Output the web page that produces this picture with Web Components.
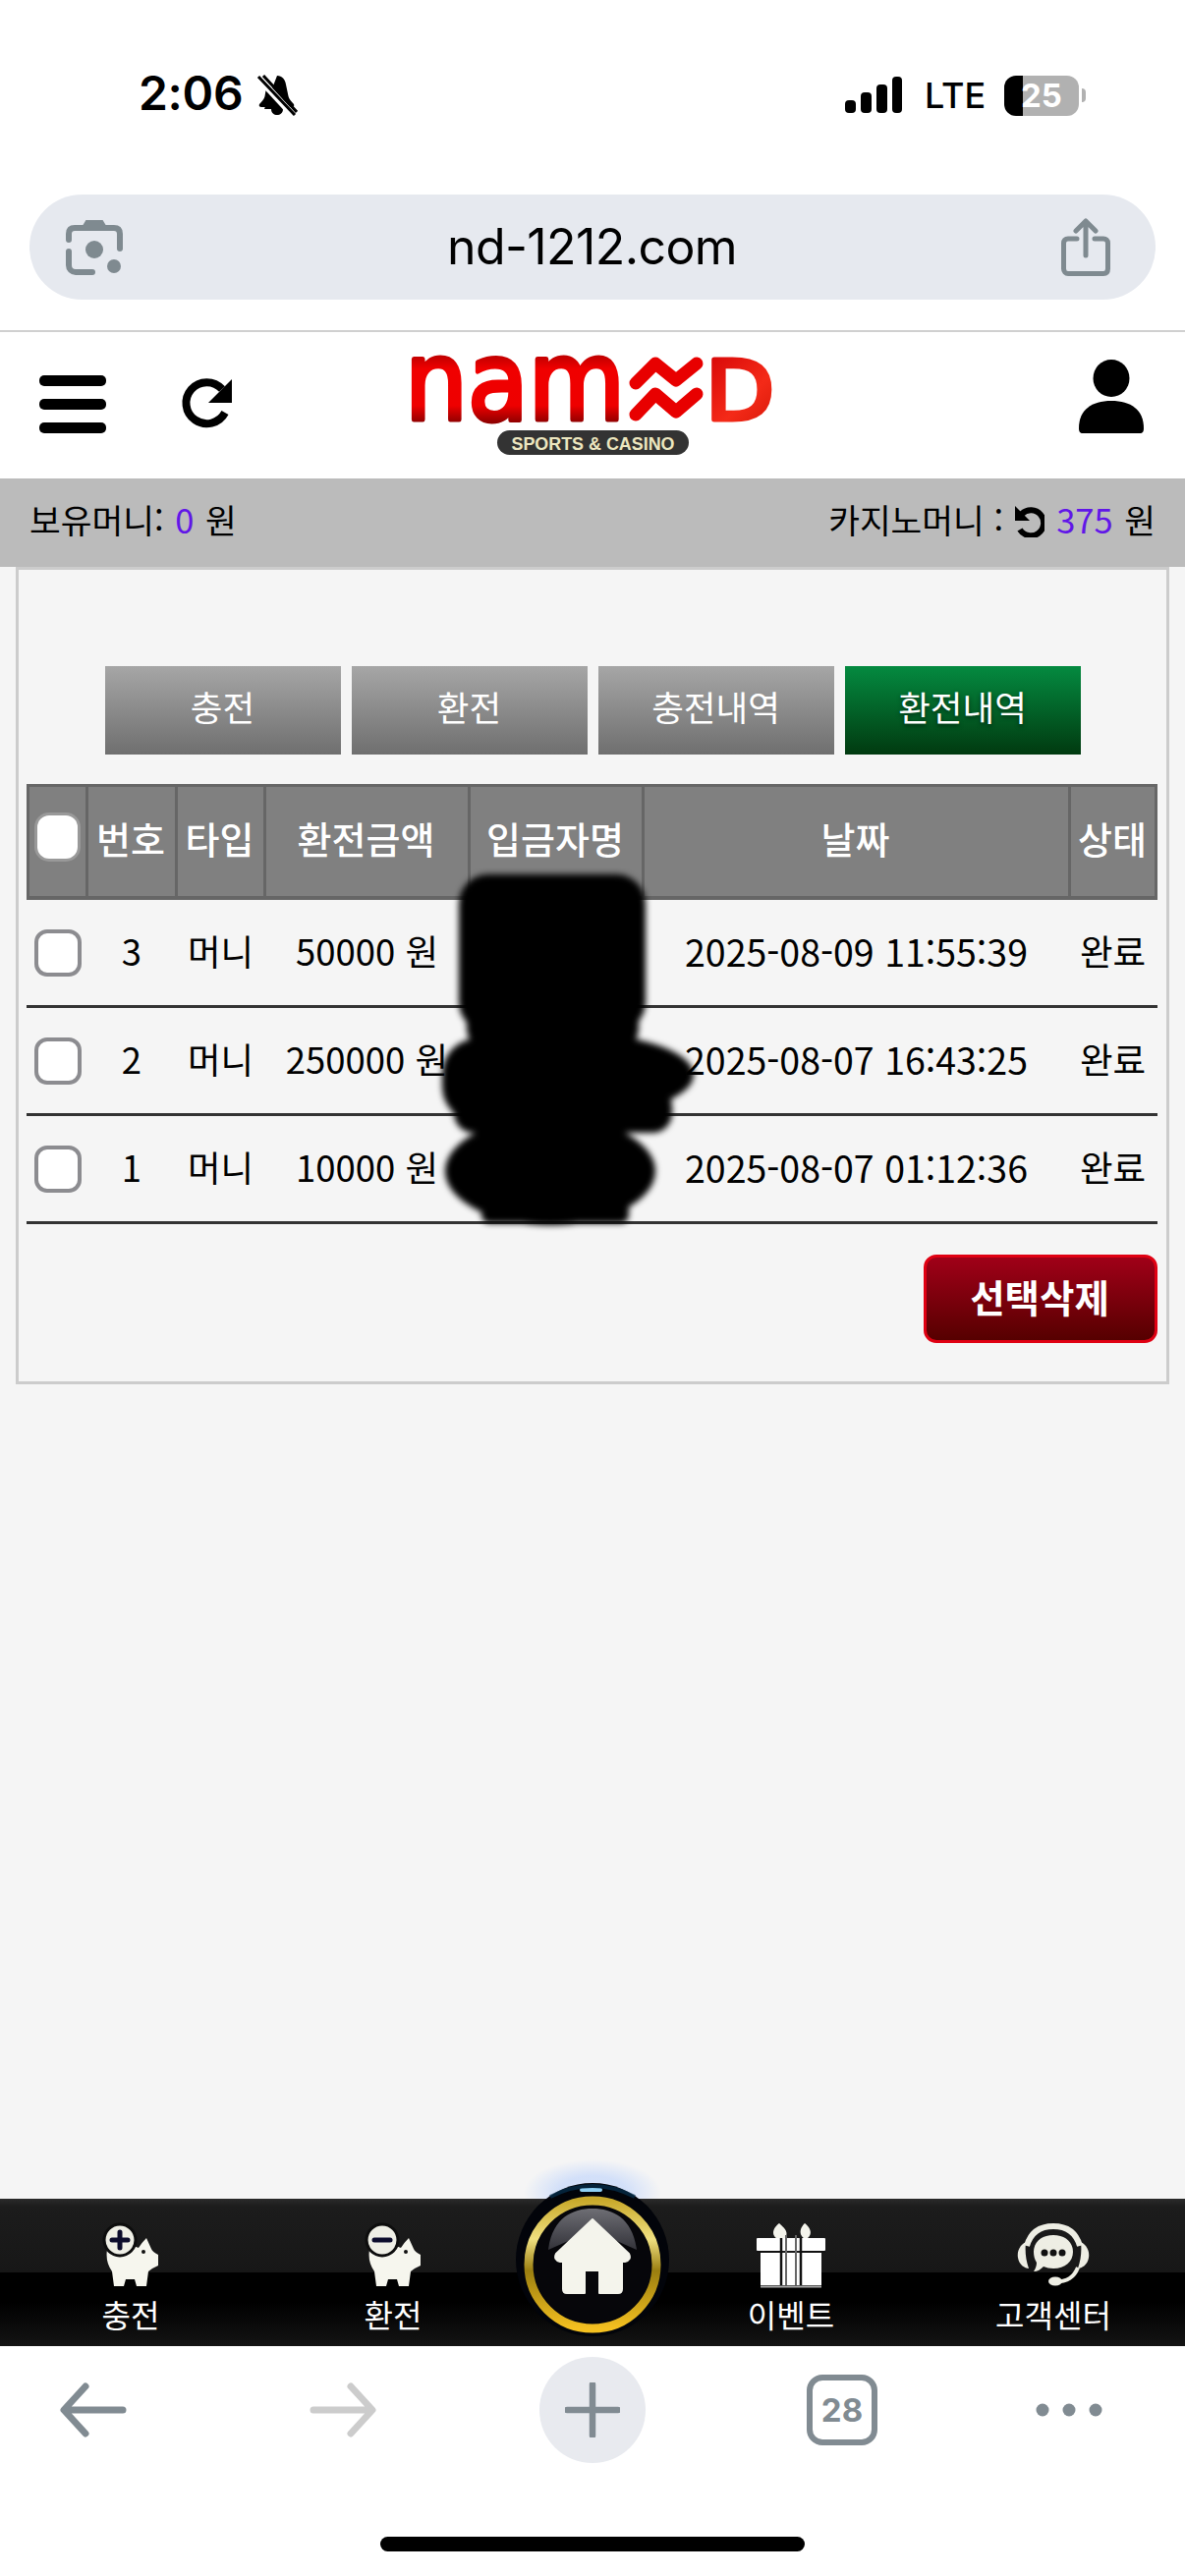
<!DOCTYPE html>
<html lang="ko">
<head>
<meta charset="utf-8">
<title>nd-1212.com</title>
<style>
  html, body { margin: 0; padding: 0; background: #f5f5f5; }
  body {
    width: 1206px;
    height: 2622px;
    display: flex;
    flex-direction: column;
    overflow: hidden;
    font-family: "Noto Sans CJK KR", "Noto Sans", sans-serif;
  }
  .grow { flex: 1; }
</style>
</head>
<body>
  <phone-top></phone-top>
  <site-header></site-header>
  <money-bar></money-bar>
  <history-panel></history-panel>
  <div class="grow"></div>
  <bottom-nav></bottom-nav>
  <browser-toolbar></browser-toolbar>

<script>
const KR = `"Noto Sans CJK KR", "Noto Sans", sans-serif`;
const COLS = '63px 91px 90px 208px 177px 434px 88px';

class PhoneTop extends HTMLElement {
  constructor() {
    super();
    this.attachShadow({ mode: 'open' });
  }
  connectedCallback() {
    this.shadowRoot.innerHTML = `
      <style>
        :host { display: block; background: #fff; height: 338px; box-sizing: border-box; border-bottom: 2px solid #d0d0d0; font-family: Inter, sans-serif; }
        #status { height: 198px; box-sizing: border-box; padding: 68px 101px 0 141px; display: flex; align-items: flex-start; }
        #time { font-size: 48px; line-height: 54px; font-weight: 600; letter-spacing: -0.3px; color: #000; }
        #bell { margin: 8px 0 0 14px; }
        #right { margin-left: auto; display: flex; align-items: flex-start; }
        #lte { font-size: 36px; line-height: 44px; font-weight: 500; margin: 7px 0 0 23px; width: 81px; color: #000; }
        #battery { position: relative; width: 76px; height: 41px; margin-top: 9px; border-radius: 12px; overflow: hidden; background: linear-gradient(90deg, #000 25%, #b1b1b1 25%); color: #fff; font-size: 33px; line-height: 41px; font-weight: 700; text-align: center; }
        #tip { width: 4px; height: 14px; margin: 22px 0 0 3px; background: #b1b1b1; border-radius: 0 8px 8px 0; }
        #bar { height: 107px; margin: 0 30px; border-radius: 54px; background: #e6e9ef; display: flex; align-items: center; justify-content: space-between; padding: 0 46px 0 37px; }
        #url { font-size: 50px; line-height: 107px; color: #000; letter-spacing: -0.6px; }
      </style>
      <div id="status">
        <span id="time">2:06</span>
        <svg id="bell" width="42" height="42" viewBox="0 0 42 42">
          <path d="M21 1c5 0 8 3.500 9 9l2.500 12c.5 3 3 5 5.500 8 1 2-.5 3-2 3H5c-1.500 0-3-1-2-3 2.500-3 5-5 5.500-8l1-6L30 35H8zM15 35h12c0 4-3 6-6 6s-6-2-6-6z" fill="#000"/>
          <path d="M2 3l35 38" stroke="#fff" stroke-width="7"/>
          <path d="M2 2l37 39M7 1l34 37" stroke="#000" stroke-width="3"/>
        </svg>
        <div id="right">
          <svg width="58" height="38" viewBox="0 0 58 38" style="margin-top:10px" fill="#000">
            <rect x="0" y="24" width="11" height="13" rx="4"/>
            <rect x="16" y="16" width="11" height="21" rx="4"/>
            <rect x="32" y="8" width="11" height="29" rx="4"/>
            <rect x="48" y="0" width="10" height="37" rx="4"/>
          </svg>
          <span id="lte">LTE</span>
          <div id="battery">25</div>
          <div id="tip"></div>
        </div>
      </div>
      <div id="bar">
        <svg width="58" height="58" viewBox="0 0 58 58" fill="none" stroke="#7f8a90" stroke-width="6" stroke-linecap="round">
          <path d="M3 21v-6c0-4 2-6 6-6h40c4 0 6 2 6 6v6" />
          <path d="M3 33v14c0 4 3 7 7 7h17" />
          <path d="M55 21v9"/>
          <path d="M18 7l3-5h16l3 5z" fill="#7f8a90" stroke-width="2"/>
          <circle cx="29" cy="31" r="9" fill="#7f8a90" stroke="none"/>
          <circle cx="49" cy="48" r="7" fill="#7f8a90" stroke="none"/>
        </svg>
        <span id="url">nd-1212.com</span>
        <svg width="50" height="60" viewBox="0 0 50 60" fill="none" stroke="#7f8a90" stroke-width="5" stroke-linecap="round" stroke-linejoin="round">
          <path d="M16 21H7c-3 0-4.500 2-4.500 4.500v26c0 3 2 5 4.500 5h36c3 0 4.500-2 4.500-5v-26c0-3-2-4.500-4.500-4.500h-9"/>
          <path d="M25 38V4M15 13l10-10 10 10"/>
        </svg>
      </div>`;
  }
}
customElements.define('phone-top', PhoneTop);

class SiteHeader extends HTMLElement {
  constructor() {
    super();
    this.attachShadow({ mode: 'open' });
  }
  connectedCallback() {
    this.shadowRoot.innerHTML = `
      <style>
        :host { display: block; background: #fff; height: 149px; position: relative; }
        #row { height: 100%; display: flex; align-items: flex-start; padding: 0 42px 0 40px; box-sizing: border-box; }
        #menu { margin-top: 44px; display: flex; flex-direction: column; gap: 12px; width: 68px; }
        #menu i { display: block; height: 11px; background: #000; border-radius: 5px; margin-bottom: 1px; }
        #refresh { margin: 46px 0 0 74px; }
        #logo { margin: 18px 0 0 168px; overflow: visible; }
        #user { margin: 28px 0 0 auto; }
        .brand { font-family: "DejaVu Sans", sans-serif; font-weight: 400; stroke-width: 5; stroke-linejoin: round; }
        .tag { font-family: "Liberation Sans", sans-serif; font-weight: 700; }
      </style>
      <div id="row">
        <div id="menu"><i></i><i></i><i></i></div>
        <svg id="refresh" width="56" height="54" viewBox="0 0 56 54" fill="none">
          <path d="M44 12A21 21 0 1 0 47 36" stroke="#000" stroke-width="8"/>
          <path d="M54 2v24H30z" fill="#000"/>
        </svg>
        <svg id="logo" width="394" height="112" viewBox="406 356 394 112">
          <defs>
            <linearGradient id="red" gradientUnits="userSpaceOnUse" x1="0" y1="362" x2="0" y2="430">
              <stop offset="0" stop-color="#c00000"/>
              <stop offset=".2" stop-color="#f00000"/>
              <stop offset=".75" stop-color="#ee0000"/>
              <stop offset="1" stop-color="#900000"/>
            </linearGradient>
            <linearGradient id="redD" gradientUnits="userSpaceOnUse" x1="722" y1="362" x2="790" y2="430">
              <stop offset="0" stop-color="#d80808"/>
              <stop offset=".6" stop-color="#f42a18"/>
              <stop offset="1" stop-color="#d81808"/>
            </linearGradient>
          </defs>
          <text class="brand" x="412" y="427" font-size="112" textLength="224" lengthAdjust="spacingAndGlyphs" fill="url(#red)" stroke="url(#red)">nam</text>
          <path d="M647 390l20-20 21 17 21-17M647 422l20-21 21 18 21-18" fill="none" stroke="#e80000" stroke-width="13" stroke-linecap="round" stroke-linejoin="round"/>
          <text class="brand" x="718" y="427" font-size="84" textLength="70" lengthAdjust="spacingAndGlyphs" fill="url(#redD)" stroke="url(#redD)">D</text>
          <rect x="506" y="438" width="195" height="25" rx="12.500" fill="#333"/>
          <text class="tag" x="603.500" y="457.500" font-size="19" text-anchor="middle" textLength="166" lengthAdjust="spacingAndGlyphs" fill="#ece6bf">SPORTS &amp; CASINO</text>
        </svg>
        <svg id="user" width="66" height="76" viewBox="0 0 66 76" fill="#000">
          <ellipse cx="33" cy="19" rx="18.500" ry="19"/>
          <path d="M0 70c0-19 13-28 33-28s33 9 33 28c0 3-1 5-4 5H4c-3 0-4-2-4-5z"/>
        </svg>
      </div>`;
  }
}
customElements.define('site-header', SiteHeader);

class MoneyBar extends HTMLElement {
  constructor() {
    super();
    this.attachShadow({ mode: 'open' });
  }
  connectedCallback() {
    this.shadowRoot.innerHTML = `
      <style>
        :host { display: flex; align-items: center; justify-content: space-between; height: 90px; box-sizing: border-box; background: #bbb; padding: 0 30px 8px; font-family: ${KR}; font-size: 34.500px; color: #000; white-space: nowrap; }
        b { font-weight: 400; color: #6116e8; margin: 0 2px 0 2px; }
        span { display: flex; align-items: center; }
        svg { margin: 4px 12px 0 10px; }
        .gap { white-space: pre; }
      </style>
      <span><span class="gap">보유머니: </span><b>0</b><span class="gap"> 원</span></span>
      <span><span class="gap">카지노머니 :</span><svg width="32" height="34" viewBox="0 0 32 34" fill="none"><path d="M9 10A13 13 0 1 1 7 26" stroke="#000" stroke-width="6"/><path d="M2 2v15h15z" fill="#000"/></svg><b style="margin-left:0">375</b><span class="gap"> 원</span></span>`;
  }
}
customElements.define('money-bar', MoneyBar);

const HistoryRowStyle = `
:host {
  display: grid;
  grid-template-columns: ${COLS};
  height: 110px;
  box-sizing: border-box;
  border-bottom: 3px solid #333;
  align-items: center;
  text-align: center;
  color: #000;
  font-size: 36.500px;
  white-space: nowrap;
}
span { padding: 0 3px 5px 0; }
.date { font-size: 37.500px; }
i {
  display: block;
  width: 48px;
  height: 48px;
  box-sizing: border-box;
  margin-left: 8px;
  background: #fff;
  border: 4px solid #8c8c90;
  border-radius: 13px;
}
`;

class HistoryRow extends HTMLElement {
  constructor() {
    super();
    this.attachShadow({ mode: 'open' });
  }
  connectedCallback() {
    const a = (n) => this.getAttribute(n);
    this.shadowRoot.innerHTML = `<style>${HistoryRowStyle}</style>
      <i></i><span>${a('no')}</span><span>머니</span><span>${a('amount')} 원</span><span></span><span class="date">${a('date')}</span><span>완료</span>`;
  }
}
customElements.define('history-row', HistoryRow);

class HistoryPanel extends HTMLElement {
  constructor() {
    super();
    this.attachShadow({ mode: 'open' });
  }
  connectedCallback() {
    this.shadowRoot.innerHTML = `
      <style>
        :host { display: block; position: relative; box-sizing: border-box; margin: 0 16px; height: 832px; padding: 98px 9px 0 8px; background: #f5f5f5; border: 3px solid #ccc; font-family: ${KR}; }
        #tabs { display: flex; gap: 11px; justify-content: center; margin-left: 1px; }
        #tabs a { width: 240px; height: 90px; line-height: 82px; text-align: center; color: #fff; font-size: 35.500px; background: linear-gradient(#a6a6a6, #6f6f6f); }
        #tabs a.on { background: linear-gradient(#048a40, #013a10); text-shadow: 0 2px 4px rgba(0,0,0,.5); }
        #head { margin-top: 30px; display: grid; grid-template-columns: ${COLS}; height: 118px; box-sizing: border-box; background: #808080; box-shadow: inset 0 0 0 3px #666, inset 0 -4px 0 #666; color: #fff; font-size: 38px; font-weight: 500; text-align: center; align-items: stretch; white-space: nowrap; }
        #head span { display: flex; align-items: center; justify-content: center; box-sizing: border-box; border-right: 3px solid #666; padding: 0 2px 9px 0; }
        #head span:first-child { padding-right: 0; }
        #head span:last-child { border-right: 0; padding-right: 4px; }
        #head i { display: block; width: 41px; height: 44px; margin: 0 0 2px 2px; background: #fff; border-radius: 12px; box-shadow: 0 0 0 3px #999; }
        #foot { display: flex; justify-content: flex-end; margin-top: 31px; }
        #del { width: 238px; height: 90px; box-sizing: border-box; border: 3px solid #e00012; border-radius: 13px; background: linear-gradient(#a00018, #560000); color: #fff; font-family: inherit; font-size: 38.500px; font-weight: 700; padding: 0 2px 6px 0; }
        #mask { position: absolute; left: 411px; top: 297px; pointer-events: none; }
      </style>
      <div id="tabs"><a>충전</a><a>환전</a><a>충전내역</a><a class="on">환전내역</a></div>
      <div id="head"><span><i></i></span><span>번호</span><span>타입</span><span>환전금액</span><span>입금자명</span><span>날짜</span><span>상태</span></div>
      <history-row no="3" amount="50000" date="2025-08-09 11:55:39"></history-row>
      <history-row no="2" amount="250000" date="2025-08-07 16:43:25"></history-row>
      <history-row no="1" amount="10000" date="2025-08-07 01:12:36"></history-row>
      <div id="foot"><button id="del">선택삭제</button></div>
      <svg id="mask" width="300" height="380" viewBox="430 880 300 380">
        <filter id="soft"><feGaussianBlur stdDeviation="3"/></filter>
        <g fill="#000" filter="url(#soft)">
          <rect x="467" y="893" width="190" height="160" rx="30"/>
          <rect x="475" y="1000" width="175" height="70" rx="20"/>
          <ellipse cx="578" cy="1097" rx="128" ry="43"/>
          <rect x="450" y="1060" width="180" height="85" rx="36"/>
          <rect x="462" y="1110" width="222" height="46" rx="20"/>
          <ellipse cx="560" cy="1195" rx="107" ry="55"/>
          <rect x="490" y="1180" width="150" height="68" rx="8"/>
        </g>
      </svg>`;
  }
}
customElements.define('history-panel', HistoryPanel);

const Pig = (sign) => `
  <svg width="70" height="70" viewBox="0 0 70 70" style="display:block;margin-left:2px">
    <path d="M10 28Q8 40 15 50L17 65H27L29 58H38L40 65H50L52 50Q57 46 62 44V33Q56 30 55 27L50 16Q45 21 42 26Q28 20 10 28Z" fill="#f6f6ee"/>
    <circle cx="47" cy="30" r="2" fill="#111"/>
    <circle cx="23" cy="18" r="16" fill="#efefe6" stroke="#0d0d0d" stroke-width="3"/>
    ${sign}
  </svg>`;

class BottomNav extends HTMLElement {
  constructor() {
    super();
    this.attachShadow({ mode: 'open' });
  }
  connectedCallback() {
    const plus = '<path d="M23 10v16M15 18h16" stroke="#0c0c2c" stroke-width="5" stroke-linecap="round"/>';
    const minus = '<path d="M15 18h16" stroke="#0c0c2c" stroke-width="5" stroke-linecap="round"/>';
    this.shadowRoot.innerHTML = `
      <style>
        :host { display: grid; position: relative; grid-template-columns: 266px 268px 138px 266px 268px; height: 150px; background: linear-gradient(#2b2b2b 0, #1c1c1c 8px, #171717 50%, #000 50%, #000 70%, #141414 100%); color: #fff; font-family: ${KR}; font-size: 32px; }
        .item { display: flex; flex-direction: column; align-items: center; padding-top: 24px; box-sizing: border-box; }
        .item svg { height: 70px; }
        .item span { line-height: 46px; white-space: nowrap; }
        #home { position: relative; }
        #home svg { position: absolute; left: -31px; top: -48px; }
      </style>
      <div class="item">${Pig(plus)}<span>충전</span></div>
      <div class="item">${Pig(minus)}<span>환전</span></div>
      <div id="home">
        <svg width="200" height="200" viewBox="503 2190 200 200">
          <defs>
            <radialGradient id="glow"><stop offset=".5" stop-color="#9fc0ff" stop-opacity=".4"/><stop offset="1" stop-color="#9fc0ff" stop-opacity="0"/></radialGradient>
            <linearGradient id="gold" x1="0" y1="0" x2="0" y2="1">
              <stop offset="0" stop-color="#c9aa2c"/>
              <stop offset=".3" stop-color="#f0e080"/>
              <stop offset=".55" stop-color="#9a7e10"/>
              <stop offset="1" stop-color="#f4c020"/>
            </linearGradient>
            <linearGradient id="gloss" x1="0" y1="0" x2="0" y2="1"><stop offset="0" stop-color="#6e6e74"/><stop offset="1" stop-color="#33333a"/></linearGradient>
          </defs>
          <clipPath id="above"><rect x="503" y="2190" width="200" height="48"/></clipPath>
          <ellipse cx="603" cy="2232" rx="70" ry="34" fill="url(#glow)" clip-path="url(#above)"/>
          <circle cx="603" cy="2300" r="78" fill="#02040a"/>
          <rect x="590" y="2227" width="23" height="4" rx="2" fill="#8fd0f4"/>
          <path d="M560 2236Q603 2214 646 2236" stroke="#06304e" stroke-width="4" fill="none" opacity=".7"/>
          <circle cx="603" cy="2305" r="65" fill="#06060a" stroke="url(#gold)" stroke-width="9"/>
          <path d="M558 2290C562 2258 582 2248 603 2248S644 2258 648 2290L603 2270Z" fill="url(#gloss)"/>
          <path d="M603 2259L640 2294Q643 2300 636 2302H633V2330Q633 2334 629 2334H610V2311H595V2334H577Q573 2334 573 2330V2302H570Q563 2300 566 2294Z" fill="#f4f4ec" stroke="#f4f4ec" stroke-width="2" stroke-linejoin="round"/>
        </svg>
      </div>
      <div class="item">
        <svg width="72" height="70" viewBox="0 0 72 70">
          <path d="M22 17C14 11 20 4 24 1C27 4 36 10 29 17zM50 17C42 11 47 4 50 1C54 4 60 11 52 17z" fill="#f4f4ec"/>
          <rect x="1" y="16" width="70" height="13" rx="1" fill="#fff"/>
          <rect x="5" y="31" width="62" height="33" fill="#fff"/>
          <path d="M5 65.500H67" stroke="#aaa" stroke-width="2"/>
          <path d="M26 16V64M46 16V64" stroke="#111" stroke-width="2.500"/>
          <path d="M31 13V64M41 13V64" stroke="#666" stroke-width="2"/>
          <path d="M1 30H26M46 30H71" stroke="#111" stroke-width="2"/>
        </svg>
        <span>이벤트</span>
      </div>
      <div class="item">
        <svg width="74" height="70" viewBox="0 0 74 70" fill="none">
          <path d="M10 24C14 10 24 4 37 4S60 10 64 24" stroke="#eeeee4" stroke-width="6"/>
          <path d="M9 20C2 24 0 30 1 36C2 43 8 47 12 47C9 38 8 30 9 20zM65 20C72 24 74 30 73 36C72 43 66 47 62 47C65 38 66 30 65 20z" fill="#eeeee4"/>
          <path d="M62 46C58 56 52 60 38 61" stroke="#eeeee4" stroke-width="4"/>
          <ellipse cx="39" cy="60" rx="7" ry="4.500" fill="#eeeee4"/>
          <path d="M37 13C49 13 57 20 57 30S49 47 37 47C33 47 30 46 27 45C24 48 21 50 17 50C19 47 20 44 20 41C18 38 17 34 17 30C17 20 25 13 37 13Z" fill="#eeeee4"/>
          <circle cx="28" cy="31" r="3.500" fill="#111"/><circle cx="37" cy="31" r="3.500" fill="#111"/><circle cx="46" cy="31" r="3.500" fill="#111"/>
        </svg>
        <span>고객센터</span>
      </div>`;
  }
}
customElements.define('bottom-nav', BottomNav);

class BrowserToolbar extends HTMLElement {
  constructor() {
    super();
    this.attachShadow({ mode: 'open' });
  }
  connectedCallback() {
    this.shadowRoot.innerHTML = `
      <style>
        :host { display: block; height: 234px; background: #fff; box-sizing: border-box; padding-top: 11px; font-family: Inter, sans-serif; }
        #row { display: grid; grid-template-columns: 190px 318px 190px 318px 144px; height: 108px; align-items: center; justify-items: center; }
        #plus { width: 108px; height: 108px; border-radius: 50%; background: #e8eaef; display: flex; align-items: center; justify-content: center; }
        #tabs { width: 72px; height: 72px; box-sizing: border-box; border: 6px solid #818b92; border-radius: 16px; display: flex; align-items: center; justify-content: center; font-size: 33px; font-weight: 700; color: #818b92; }
        #pill { width: 432px; height: 15px; margin: 75px auto 0; background: #000; border-radius: 8px; }
      </style>
      <div id="row">
        <svg width="68" height="56" viewBox="0 0 68 56" fill="none" stroke="#818b92" stroke-width="7" stroke-linecap="round" stroke-linejoin="round">
          <path d="M26 4L4 28l22 24M6 28h58"/>
        </svg>
        <svg width="68" height="56" viewBox="0 0 68 56" fill="none" stroke="#ccc" stroke-width="7" stroke-linecap="round" stroke-linejoin="round">
          <path d="M42 4l22 24-22 24M4 28h58"/>
        </svg>
        <div id="plus">
          <svg width="56" height="56" viewBox="0 0 56 56" stroke="#818b92" stroke-width="6.500" stroke-linecap="round"><path d="M28 2v52M2 28h52"/></svg>
        </div>
        <div id="tabs">28</div>
        <svg width="68" height="14" viewBox="0 0 68 14" fill="#818b92">
          <circle cx="7" cy="7" r="6.500"/><circle cx="34" cy="7" r="6.500"/><circle cx="61" cy="7" r="6.500"/>
        </svg>
      </div>
      <div id="pill"></div>`;
  }
}
customElements.define('browser-toolbar', BrowserToolbar);
</script>
</body>
</html>
